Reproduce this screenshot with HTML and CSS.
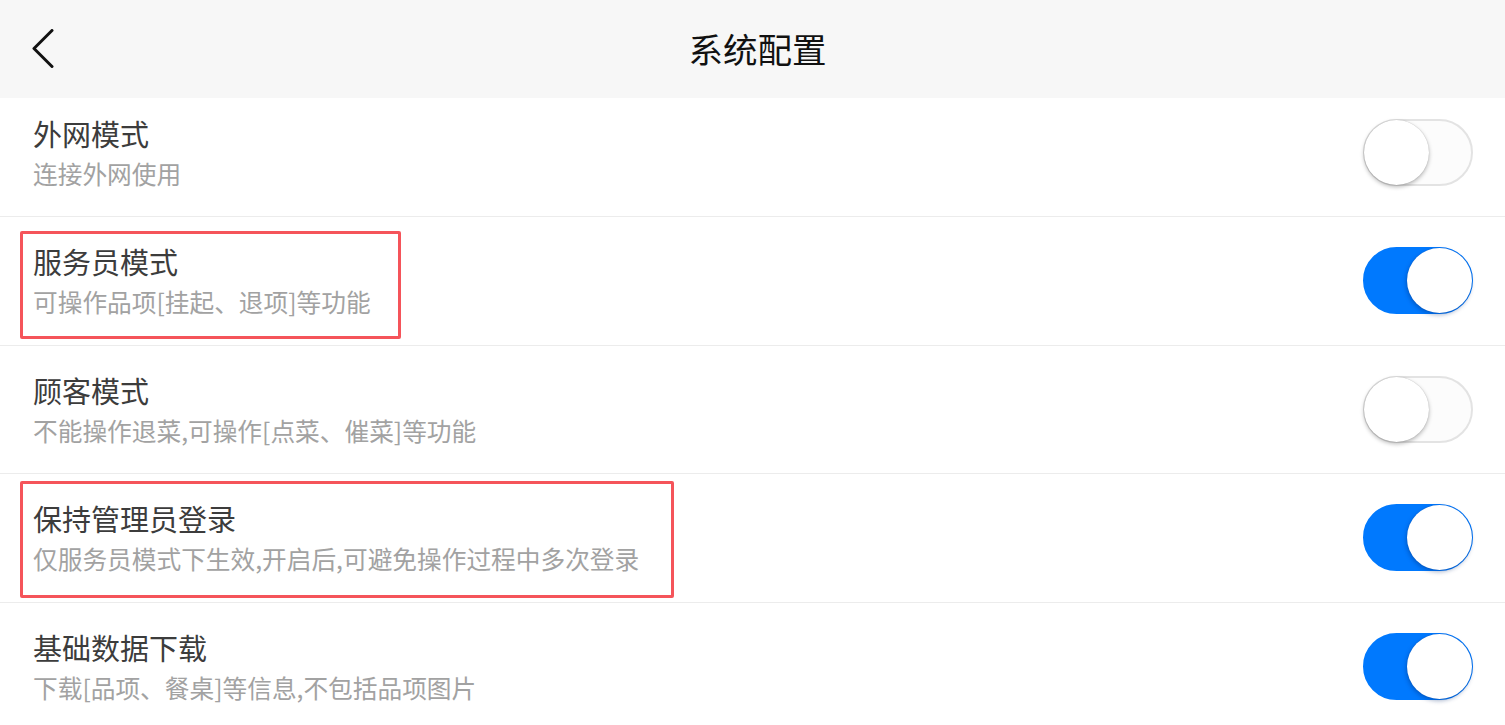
FILE: index.html
```html
<!DOCTYPE html>
<html lang="zh-CN">
<head>
<meta charset="utf-8">
<title>系统配置</title>
<link rel="stylesheet" href="styles.css">
</head>
<body>
<div class="app">
  <header class="topbar">
    <div class="back">
      <svg width="22" height="39" viewBox="0 0 22 39" aria-hidden="true">
        <polyline points="20,1.5 2,19.5 20,37.5" fill="none" stroke="#111" stroke-width="3" stroke-linecap="round" stroke-linejoin="round"/>
      </svg>
    </div>
    <h1 class="title">系统配置</h1>
    <div class="spacer"></div>
  </header>
  <main class="viewport">
    <ul class="list">
      <li class="row">
        <div class="text">
          <div class="name">外网模式</div>
          <div class="desc">连接外网使用</div>
        </div>
        <span class="switch"><span class="knob"></span></span>
      </li>
      <li class="row">
        <div class="mark mark-a"></div>
        <div class="text">
          <div class="name">服务员模式</div>
          <div class="desc">可操作品项[挂起、退项]等功能</div>
        </div>
        <span class="switch on"><span class="knob"></span></span>
      </li>
      <li class="row">
        <div class="text">
          <div class="name">顾客模式</div>
          <div class="desc">不能操作退菜,可操作[点菜、催菜]等功能</div>
        </div>
        <span class="switch"><span class="knob"></span></span>
      </li>
      <li class="row">
        <div class="mark mark-b"></div>
        <div class="text">
          <div class="name">保持管理员登录</div>
          <div class="desc">仅服务员模式下生效,开启后,可避免操作过程中多次登录</div>
        </div>
        <span class="switch on"><span class="knob"></span></span>
      </li>
      <li class="row">
        <div class="text">
          <div class="name">基础数据下载</div>
          <div class="desc">下载[品项、餐桌]等信息,不包括品项图片</div>
        </div>
        <span class="switch on"><span class="knob"></span></span>
      </li>
    </ul>
  </main>
</div>
</body>
</html>
```
FILE: styles.css
```css
* { box-sizing: border-box; }
html, body { margin: 0; padding: 0; }
body {
  width: 1505px;
  height: 725px;
  overflow: hidden;
  background: #ffffff;
  font-family: "Noto Sans CJK SC", "Noto Sans", sans-serif;
}
.app { display: flex; flex-direction: column; height: 725px; }

.topbar {
  height: 98px;
  flex: none;
  background: #f7f7f7;
  display: grid;
  grid-template-columns: 1fr auto 1fr;
  align-items: center;
}
.back { padding-left: 32px; display: flex; align-items: center; padding-bottom: 2px; }
.back svg { display: block; }
.title {
  margin: 0;
  font-size: 34.5px;
  font-weight: 400;
  color: #111;
  line-height: 40px;
  padding-left: 10px;
  padding-bottom: 2px;
}

.viewport { flex: 1; overflow: hidden; }
.list { list-style: none; margin: -9.5px 0 0 0; padding: 0; }
.row {
  position: relative;
  height: 128.5px;
  border-bottom: 1.5px solid #ececec;
  display: flex;
  align-items: center;
  justify-content: space-between;
  padding: 0 32px 0 33px;
}
.text { padding-top: 2px; }
.name {
  font-size: 29px;
  line-height: 40px;
  color: #3c3c3c;
}
.desc {
  font-size: 24.7px;
  line-height: 41px;
  color: #a2a2a2;
}

.switch {
  position: relative;
  flex: none;
  width: 110px;
  height: 67px;
  border-radius: 34px;
  background: #fcfcfc;
  border: 2px solid #e3e3e3;
}
.switch .knob {
  position: absolute;
  top: -1px;
  left: -1px;
  width: 65px;
  height: 65px;
  border-radius: 50%;
  background: #fff;
  box-shadow: 0 2px 4px rgba(0,0,0,0.28), 0 0 1px rgba(0,0,0,0.25);
}
.switch.on {
  background: #0079fe;
  border-color: #0079fe;
}
.switch.on .knob {
  left: auto;
  right: -1px;
  box-shadow: -1px 2px 4px rgba(0,40,110,0.35), 0 0 1px rgba(0,40,110,0.4);
}

.mark {
  position: absolute;
  border: 3px solid #f5545a;
  border-radius: 2px;
  pointer-events: none;
}
.mark-a { left: 20px; top: 14px; width: 381px; height: 108px; }
.mark-b { left: 20px; top: 7px; width: 654px; height: 117px; }
```
